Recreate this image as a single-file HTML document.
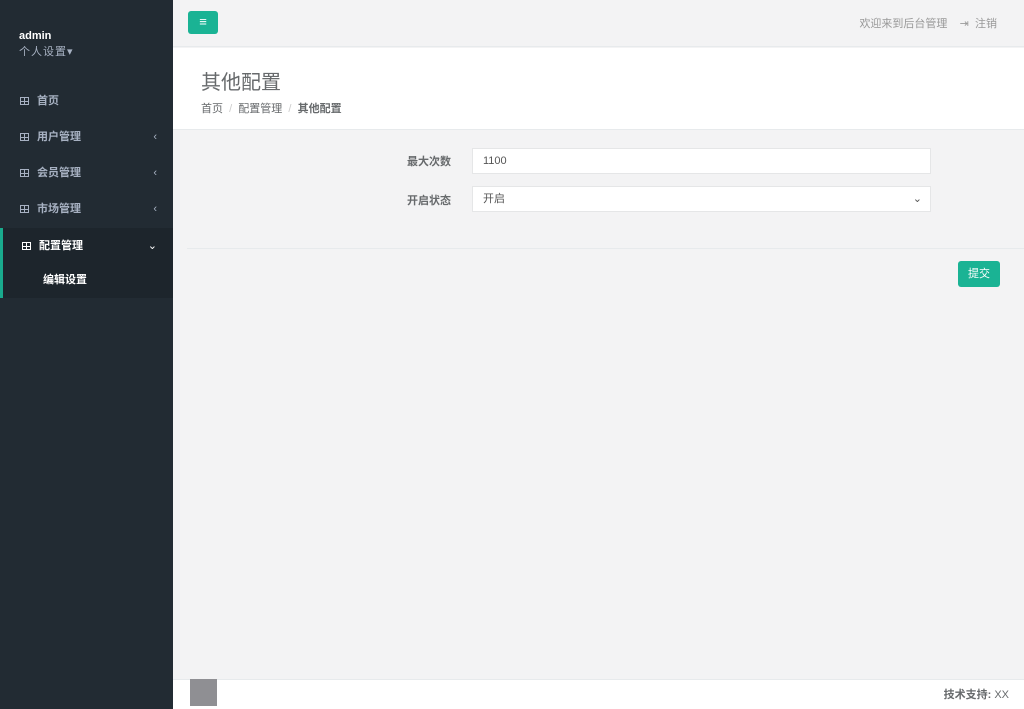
<!DOCTYPE html>
<html><head><meta charset="utf-8"><style>
*{margin:0;padding:0;box-sizing:border-box}
body{width:1024px;height:709px;overflow:hidden;font-family:"Liberation Sans","Noto Sans CJK SC",sans-serif;background:#f3f3f4;position:relative;font-size:11px;color:#676a6c}
.side{position:absolute;left:0;top:0;width:173px;height:709px;background:#222b33}
.side .u{position:absolute;left:19px;top:30px;color:#fff;font-weight:bold;font-size:11px}
.side .s{position:absolute;left:19px;top:43px;color:#a7b1c2;font-size:11px;letter-spacing:1px}
.nav{position:absolute;left:0;width:173px;height:36px;color:#a7b1c2;font-size:11px;font-weight:bold;padding-left:20px;line-height:36px}
.nav i{display:inline-block;width:9px;height:8px;border:1px solid #a7b1c2;margin-right:8px;vertical-align:-1px;background:linear-gradient(#a7b1c2,#a7b1c2) 3px 0/1px 100% no-repeat,linear-gradient(#a7b1c2,#a7b1c2) 0 3px/100% 1px no-repeat}
.nav b{position:absolute;right:16px;font-weight:normal}
.act{background:#1d252c;border-left:3px solid #19aa8d;color:#fff;padding-left:19px}
.act i{border-color:#fff;background:linear-gradient(#fff,#fff) 3px 0/1px 100% no-repeat,linear-gradient(#fff,#fff) 0 3px/100% 1px no-repeat}
.top{position:absolute;left:173px;top:0;right:0;height:47px;background:#f3f3f4;border-bottom:1px solid #e7eaec}
.btn{position:absolute;background:#1ab394;border-radius:3px;color:#fff}
.hdr{position:absolute;left:173px;top:48px;right:0;height:82px;background:#fff;border-bottom:1px solid #e7eaec}
.foot{position:absolute;left:173px;bottom:0;right:0;height:30px;background:#fff;border-top:1px solid #e7eaec}
.inp{position:absolute;left:472px;width:459px;height:26px;border:1px solid #e5e6e7;background:#fff;font-size:11px;line-height:24px;padding-left:10px;color:#555}
.lbl{position:absolute;font-weight:bold;font-size:11px;color:#676a6c}
</style></head><body>
<div class="side">
<div class="u">admin</div><div class="s">个人设置▾</div>
<div class="nav" style="top:83px"><i></i>首页</div>
<div class="nav" style="top:119px"><i></i>用户管理<b>‹</b></div>
<div class="nav" style="top:155px"><i></i>会员管理<b>‹</b></div>
<div class="nav" style="top:191px"><i></i>市场管理<b>‹</b></div>
<div class="nav act" style="top:228px"><i></i>配置管理<b>⌄</b></div>
<div class="nav act" style="top:262px;height:36px;padding-left:40px;border-left:3px solid #19aa8d">编辑设置</div>
</div>
<div class="top">
<div class="btn" style="left:15px;top:11px;width:30px;height:23px;text-align:center;line-height:22px;font-size:13px">≡</div>
<div style="position:absolute;right:27px;top:15px;font-size:11px;color:#999">欢迎来到后台管理 &nbsp; &nbsp;⇥ &nbsp;注销</div>
</div>
<div class="hdr">
<div style="position:absolute;left:28px;top:18px;font-size:20px;color:#676a6c">其他配置</div>
<div style="position:absolute;left:28px;top:52px;font-size:11px;color:#676a6c">首页 <span style="color:#ccc">&nbsp;/&nbsp;</span> 配置管理 <span style="color:#ccc">&nbsp;/&nbsp;</span> <b>其他配置</b></div>
</div>
<div class="lbl" style="left:407px;top:153px">最大次数</div>
<div class="inp" style="top:148px">1100</div>
<div class="lbl" style="left:407px;top:192px">开启状态</div>
<div class="inp" style="top:186px">开启<span style="position:absolute;right:8px">⌄</span></div>
<div style="position:absolute;left:187px;right:0;top:248px;border-top:1px solid #e7eaec"></div>
<div class="btn" style="left:958px;top:261px;width:42px;height:26px;text-align:center;line-height:26px;font-size:11px">提交</div>
<div class="foot"><div style="position:absolute;right:15px;top:6px;font-weight:bold;color:#676a6c">技术支持: <span style="font-weight:normal">XX</span></div>
<div style="position:absolute;left:17px;top:-1px;width:27px;height:27px;background:#8f8f93"></div></div>
</body></html>
